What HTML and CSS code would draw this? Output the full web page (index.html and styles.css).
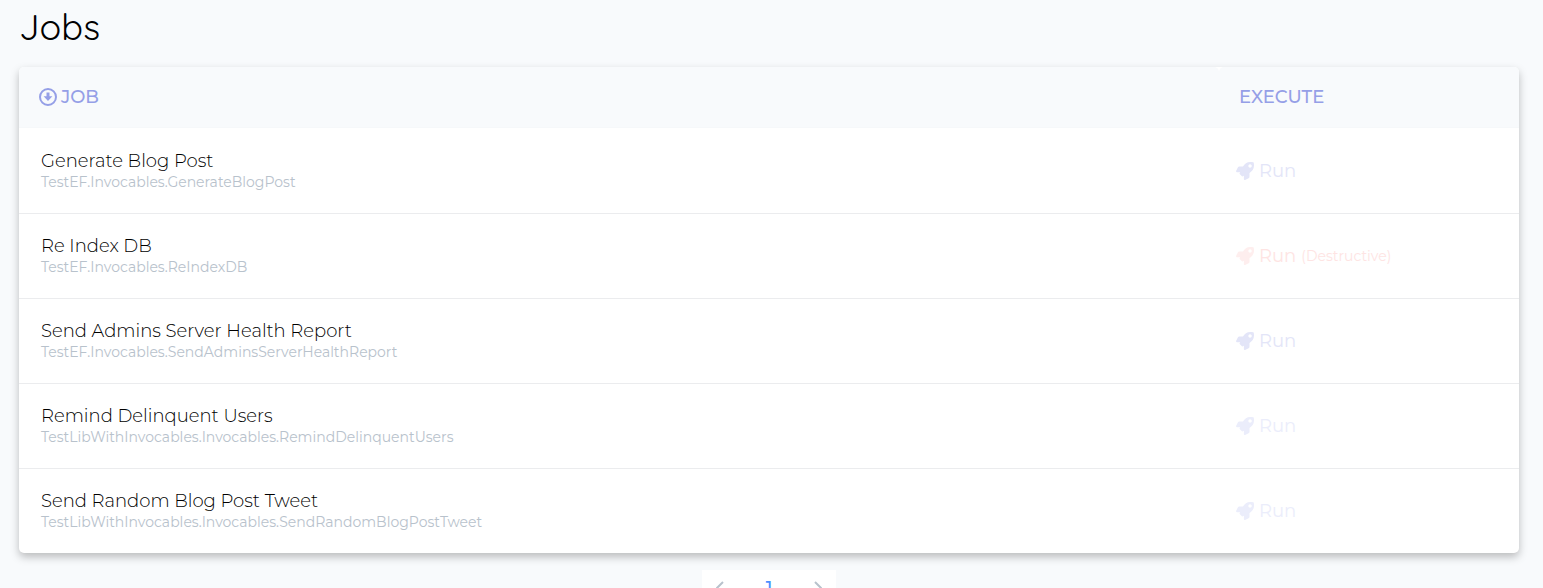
FILE: index.html
```
<!DOCTYPE html>
<html lang="en">
<head>
    <meta charset="UTF-8">
    <meta name="viewport" content="width=device-width, initial-scale=1.0">
    <title>Jobs</title>
    <link rel="stylesheet" href="styles.css">
</head>
<body>
    <svg class="sprite" aria-hidden="true">
        <symbol id="rocket" viewBox="0 0 512 512">
            <path d="M505.1 19.1c-1.2-5.5-6.7-11-12.2-12.2C460.600 0 435.500 0 410.400 0 307.200 0 245.300 55.200 199.100 128H94.900c-18.200 0-34.800 10.300-42.900 26.500L2.600 253.300c-8 16 3.600 34.700 21.500 34.700h95.100c-5.900 12.800-11.900 25.500-18 37.700-3.100 6.200-1.900 13.600 3 18.500l63.600 63.600c4.900 4.900 12.300 6.100 18.500 3 12.200-6.100 24.900-12 37.700-17.900V488c0 17.800 18.800 29.400 34.700 21.500l98.700-49.400c16.300-8.100 26.500-24.800 26.500-42.900V312.800c72.600-46.300 128-108.400 128-211.100.1-25.200.1-50.300-6.800-82.600zM400 160c-26.500 0-48-21.500-48-48s21.500-48 48-48 48 21.500 48 48-21.500 48-48 48z"/>
        </symbol>
    </svg>
    <main class="page">
        <h1>Jobs</h1>
        <table class="jobs">
            <thead>
                <tr>
                    <th class="job-col" scope="col">
                        <button class="sort" type="button">
                            <svg viewBox="0 0 18 18" aria-hidden="true">
                                <circle cx="9" cy="9" r="8" fill="none" stroke="currentColor" stroke-width="2"/>
                                <path d="M7.500 4.500h3v3.800h2.900L9 13 4.600 8.300h2.900z" fill="currentColor"/>
                            </svg>
                            JOB
                        </button>
                    </th>
                    <th scope="col">EXECUTE</th>
                </tr>
            </thead>
            <tbody>
                <tr>
                    <td><div class="name">Generate Blog Post</div><div class="path">TestEF.Invocables.GenerateBlogPost</div></td>
                    <td><button class="run" type="button"><svg aria-hidden="true"><use href="#rocket"/></svg>Run</button></td>
                </tr>
                <tr>
                    <td><div class="name">Re Index DB</div><div class="path">TestEF.Invocables.ReIndexDB</div></td>
                    <td><button class="run destructive" type="button"><svg aria-hidden="true"><use href="#rocket"/></svg>Run <small>(Destructive)</small></button></td>
                </tr>
                <tr>
                    <td><div class="name">Send Admins Server Health Report</div><div class="path">TestEF.Invocables.SendAdminsServerHealthReport</div></td>
                    <td><button class="run" type="button"><svg aria-hidden="true"><use href="#rocket"/></svg>Run</button></td>
                </tr>
                <tr>
                    <td><div class="name">Remind Delinquent Users</div><div class="path">TestLibWithInvocables.Invocables.RemindDelinquentUsers</div></td>
                    <td><button class="run faint" type="button"><svg aria-hidden="true"><use href="#rocket"/></svg>Run</button></td>
                </tr>
                <tr>
                    <td><div class="name">Send Random Blog Post Tweet</div><div class="path">TestLibWithInvocables.Invocables.SendRandomBlogPostTweet</div></td>
                    <td><button class="run faint" type="button"><svg aria-hidden="true"><use href="#rocket"/></svg>Run</button></td>
                </tr>
            </tbody>
        </table>
        <nav class="pager" aria-label="Pages">
            <button type="button" aria-label="Previous page"><svg viewBox="0 0 8 14"><path d="M7 1 1 7l6 6"/></svg></button>
            <button class="current" type="button">1</button>
            <button type="button" aria-label="Next page"><svg viewBox="0 0 8 14"><path d="m1 1 6 6-6 6"/></svg></button>
        </nav>
    </main>
</body>
</html>
```
FILE: styles.css
```
* {
    box-sizing: border-box;
}
body {
    margin: 0;
    height: 100vh;
    overflow: hidden;
    background: #f8fafc;
    color: #000;
    font-family: Montserrat, Inter, sans-serif;
    font-size: 18px;
    font-weight: 300;
}
button {
    margin: 0;
    padding: 0;
    border: 0;
    background: none;
    color: inherit;
    font: inherit;
    cursor: pointer;
}
.sprite {
    display: none;
}
.page {
    padding: 4px 24px 24px 19px;
}
h1 {
    margin: 0 0 17px;
    font-family: Quicksand, Inter, sans-serif;
    font-size: 36px;
    font-weight: 400;
    line-height: 46px;
}
.jobs {
    width: 100%;
    table-layout: fixed;
    border-collapse: separate;
    border-spacing: 0;
    border-radius: 5px;
    background: #fff;
    box-shadow: 0 4px 8px rgba(0, 0, 0, 0.25);
}
th {
    height: 61px;
    padding: 0 20px;
    background: #f8fafc;
    border-bottom: 1px solid #f6f8fa;
    border-radius: 5px 5px 0 0;
    color: #959fe7;
    font-weight: 500;
    text-align: left;
}
.job-col {
    width: 80%;
}
.sort {
    display: flex;
    align-items: center;
    gap: 4px;
}
.sort svg {
    width: 18px;
    height: 18px;
}
td {
    height: 85px;
    padding: 0 22px;
    border-top: 1px solid #ebecee;
}
td + td {
    padding: 0 17px;
}
tbody tr:first-child td {
    border-top-color: transparent;
}
.name {
    font-size: 18px;
    line-height: 22px;
}
.path {
    color: #b8c2cc;
    font-size: 14px;
    font-weight: 400;
    line-height: 20px;
}
.run {
    display: flex;
    align-items: center;
    gap: 5px;
    color: #e3e5f8;
    font-weight: 400;
}
.run svg {
    width: 18px;
    height: 18px;
    fill: currentColor;
}
.run small {
    font-size: 14px;
}
.destructive {
    color: #fee4e3;
}
.destructive svg {
    opacity: 0.6;
}
.faint {
    color: #ebedfb;
}
.pager {
    display: flex;
    justify-content: space-between;
    width: 134px;
    height: 36px;
    margin: 17px auto 0;
    padding: 0 14px;
    background: #fff;
}
.pager button {
    display: flex;
    align-items: center;
    color: #b8c2cc;
}
.pager svg {
    width: 8px;
    height: 14px;
    fill: none;
    stroke: currentColor;
    stroke-width: 2;
}
.pager .current {
    color: #4a90ff;
    font-weight: 500;
}
```
